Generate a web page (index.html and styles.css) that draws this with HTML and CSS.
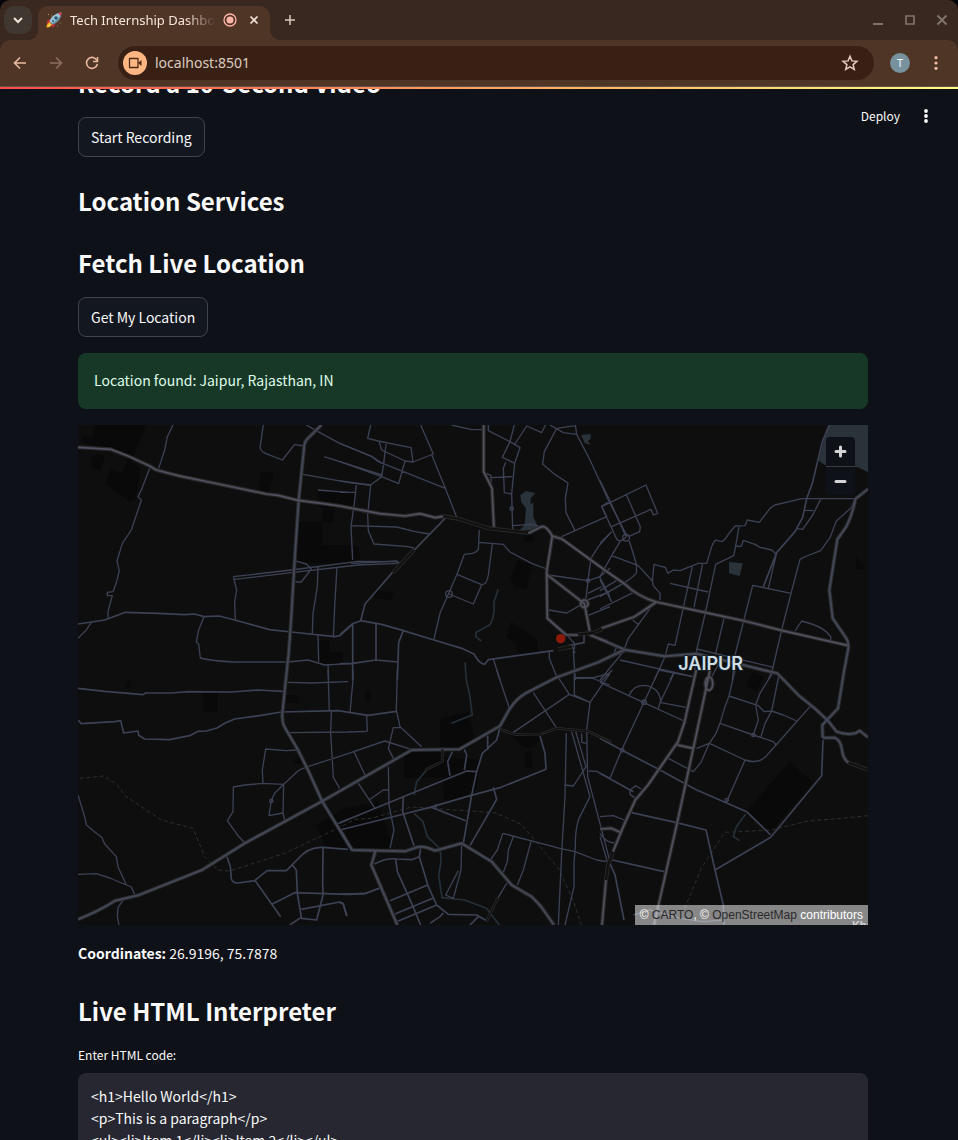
FILE: index.html
```html
<!DOCTYPE html>
<html lang="en">
<head>
<meta charset="utf-8">
<title>Tech Internship Dashboard</title>
<link rel="stylesheet" href="styles.css">
</head>
<body>
<div class="window">
  <header class="tabstrip">
    <button class="tab-search" aria-label="Search tabs"><svg width="28" height="28" viewBox="0 0 28 28"><path d="M10 12l4 4 4-4" fill="none" stroke="#f3e4da" stroke-width="2"/></svg></button>
    <div class="tab">
      <svg class="favicon" width="16" height="16" viewBox="0 0 16 16">
        <path d="M4.500 7L1.500 8.500.5 11.500 4.500 10zM9 11.500L8.500 14.500 5.500 15.500 6 11.500z" fill="#c8293a"/>
        <path d="M3.500 9.500C5 5 9 1 15.500.5 15 7 11 11 6.500 12.500z" fill="#9fc3d4"/>
        <path d="M5.500 11.500C10 9.500 14 6 15.500.5 15 7 11 11 6.500 12.500z" fill="#5f8ba3"/>
        <path d="M12 1.200L15.500.5 14.900 4z" fill="#d93343"/>
        <circle cx="10" cy="6" r="1.800" fill="#27576f"/><circle cx="7" cy="9" r="1" fill="#27576f"/>
        <path d="M3.500 10L6 12.500C5 15 2.500 15.500.5 15.500.5 13 1 11 3.500 10z" fill="#f4a21b"/>
        <path d="M3.500 11.500L4.500 12.500C4 14 2.500 14.500 1.500 14.500z" fill="#ffe36b"/>
        <path d="M2 2.500h1M5 4h1M13.500 11h1M11 14h1" stroke="#a48a62"/>
      </svg>
      <span class="tab-title">Tech Internship Dashboard</span>
      <svg width="14" height="14" viewBox="0 0 14 14"><circle cx="7" cy="7" r="6" fill="none" stroke="#ffb4a8" stroke-width="1.300"/><circle cx="7" cy="7" r="3.500" fill="#ffb4a8"/></svg>
      <button class="tab-close" aria-label="Close tab"><svg width="10" height="10" viewBox="0 0 10 10"><path d="M1.500 1.500l7 7m0-7l-7 7" stroke="#f3e4da" stroke-width="1.700"/></svg></button>
    </div>
    <button class="new-tab" aria-label="New tab"><svg width="12" height="12" viewBox="0 0 12 12"><path d="M6 1v10M1 6h10" stroke="#dbc8bc" stroke-width="1.500"/></svg></button>
    <div class="window-controls">
      <button aria-label="Minimize"><svg width="12" height="12" viewBox="0 0 12 12"><path d="M1 10h10" stroke="#80736c" stroke-width="2"/></svg></button>
      <button aria-label="Maximize"><svg width="12" height="12" viewBox="0 0 12 12"><path d="M2 2h8v8H2z" fill="none" stroke="#80736c" stroke-width="1.700"/></svg></button>
      <button aria-label="Close"><svg width="12" height="12" viewBox="0 0 12 12"><path d="M1.500 1.500l9 9m0-9l-9 9" stroke="#80736c" stroke-width="2"/></svg></button>
    </div>
  </header>
  <nav class="toolbar">
    <button aria-label="Back"><svg width="16" height="16" viewBox="0 0 16 16"><path d="M14 8H3M8 2.500L2.500 8 8 13.500" fill="none" stroke="#e9b99f" stroke-width="1.600"/></svg></button>
    <button aria-label="Forward"><svg width="16" height="16" viewBox="0 0 16 16"><path d="M2 8h11M8 2.500L13.500 8 8 13.500" fill="none" stroke="#8e6f5f" stroke-width="1.600"/></svg></button>
    <button aria-label="Reload"><svg width="16" height="16" viewBox="0 0 16 16"><path d="M13 5.500A5.500 5.500 0 1 0 13.400 9" fill="none" stroke="#e9b99f" stroke-width="1.600"/><path d="M13.500 2v4.500H9" fill="none" stroke="#e9b99f" stroke-width="1.600"/></svg></button>
    <div class="address">
      <button class="camera" aria-label="Camera in use"><svg width="14" height="12" viewBox="0 0 14 12"><path d="M1.500 1.500h8.500v9H1.500z" fill="none" stroke="#4a2a14" stroke-width="1.300" stroke-linejoin="round"/><path d="M10 6l3.500-3v6z" fill="#4a2a14"/></svg></button>
      <input type="text" aria-label="Address" value="localhost:8501">
      <button class="star" aria-label="Bookmark"><svg width="18" height="18" viewBox="0 0 18 18"><path d="M9 2.200l1.900 4.700 5 .4-3.800 3.300 1.200 4.900L9 12.800l-4.300 2.700 1.200-4.900L2.100 7.300l5-.4z" fill="none" stroke="#e2cabe" stroke-width="1.500"/></svg></button>
    </div>
    <button class="avatar" aria-label="Profile">T</button>
    <button class="menu" aria-label="Menu"><svg width="4" height="14" viewBox="0 0 4 14" fill="#f0bca1"><circle cx="2" cy="1.700" r="1.600"/><circle cx="2" cy="7" r="1.600"/><circle cx="2" cy="12.300" r="1.600"/></svg></button>
  </nav>

  <div class="app">
    <div class="decoration"></div>
    <div class="app-header">
      <button>Deploy</button>
      <button aria-label="Main menu"><svg width="4" height="14" viewBox="0 0 4 14" fill="#fafafa"><circle cx="2" cy="2" r="1.900"/><circle cx="2" cy="7" r="1.900"/><circle cx="2" cy="12" r="1.900"/></svg></button>
    </div>
    <main class="content">
      <h2>Record a 10-Second Video</h2>
      <button class="btn">Start Recording</button>
      <h2>Location Services</h2>
      <h2>Fetch Live Location</h2>
      <button class="btn">Get My Location</button>
      <div class="alert" role="alert">Location found: Jaipur, Rajasthan, IN</div>
      <section class="map" aria-label="Map of Jaipur">
        <svg class="map-canvas" viewBox="0 0 2370 1500" preserveAspectRatio="xMidYMid slice">
          <defs>
            <g id="highways">
              <path d="M730 0L690 40Q678 51 678 70L662 226L650 405L640 575L632 685L613 865Q611 890 620 907L660 975L690 1035L732 1128L822 1275"/>
              <path d="M0 1483Q60 1460 112 1427L180 1411L372 1335L500 1255L730 1130L1001 975L1144 973L1266 903L1296 850Q1316 820 1346 803L1436 757L1560 712L1640 674"/>
              <path d="M786 1215L822 1275L981 1279L1016 1267Q1036 1260 1071 1277L1151 1255L1241 1310L1301 1380L1361 1415L1388 1443L1428 1500"/>
              <path d="M893 1276L880 1320L958 1500"/>
              <path d="M2370 192L2332 222Q2325 265 2305 305L2278 343L2254 495L2264 580L2305 640Q2314 655 2310 675L2298 740L2280 850L2233 900L2234 938"/>
              <path d="M1561 640L1640 674L1760 694L1856 686L1900 697L2098 745L2163 812L2210 850L2250 887L2276 920Q2300 930 2332 925L2345 917L2370 937"/>
              <path d="M2234 938L2270 938Q2288 945 2292 975Q2296 1004 2312 1013"/>
            </g>
            <g id="arterials">
              <path d="M0 67L98 73L150 93L215 123L235 135L300 152L450 183L565 207L600 211L660 226L730 235L786 243L906 266L981 273L1026 266L1071 278L1096 274"/>
              <path d="M1217 0V140L1242 190L1248 312"/>
              <path d="M1351 325L1390 305Q1404 300 1423 333L1452 342L1580 435L1640 477Q1680 515 1735 531L1880 562L2000 588L2110 616L2308 661"/>
              <path d="M1423 333L1406 440L1408 580L1465 630H1500"/>
              <path d="M1406 448L1519 536L1535 618M1535 630L1588 650M1570 610L1670 575L1735 531"/>
              <path d="M1855 735L1840 800L1820 890L1800 950L1710 1080L1672 1125L1640 1195L1605 1280"/>
              <path d="M1896 735L1846 970L1796 1200L1728 1500M1798 960L1846 970M1566 1212L1600 1210L1627 1222M1584 1365L1572 1500"/>
              <ellipse cx="1893" cy="776" rx="11" ry="20"/>
              <circle cx="1519" cy="536" r="11"/>
            </g>
            <g id="tunnels">
              <path d="M1096 274L1140 281L1232 310L1350 323M1008 375L945 443M1500 628L1545 624L1572 612M1440 673L1480 665M1604 1285L1590 1320L1584 1365M2312 1013L2370 1035"/>
            </g>
            <g id="railways">
              <path d="M1266 913L1310 928L1390 927L1435 910L1528 918L1600 951M1093 973V1010L1042 1035M1260 1418L1225 1490"/>
            </g>
          </defs>
          <rect width="2370" height="1500" fill="#0e0e0e"/>
          <g class="block">
            <path d="M50 0H203L160 112L188 128L172 225L153 230L80 175L100 132L132 145L155 90L40 60L10 52L15 30L42 38zM40 100L55 85L80 93L68 138L38 125z"/>
            <path d="M550 138L588 146L572 200L540 190zM720 200H830V245H770L765 292H733V360H830V415H650L660 290H733V245H720zM786 362H840L846 403H786zM890 496L946 502L940 525L892 520zM725 645H755V680H795V718H725z"/>
            <path d="M1318 405L1362 418L1346 492L1315 488L1295 465zM1300 590L1380 645V685H1325L1310 655L1284 635zM1340 330H1368V350H1336z"/>
            <path d="M375 800H420V860H375zM625 810H662V833H625zM145 768H160L155 790H142zM715 1200L800 1150L900 1130L945 1270L822 1280L740 1262zM650 1000H670V1016H650z"/>
            <path d="M1088 880L1172 860L1188 940L1140 980H1086zM978 975H1095V1058H978zM1090 995L1205 1005L1195 1090L1140 1125H1098zM1296 930L1385 935L1370 965L1340 968zM1342 980L1360 980L1364 1028H1340zM860 798L878 798V828H863z"/>
            <path d="M2136 1010L2204 1073L2078 1220L2006 1158zM2026 740L2056 755L2035 800L2003 783zM2332 395L2360 420L2354 435L2335 435z"/>
          </g>
          <g class="water">
            <path d="M2253 0H2370V142L2340 127L2248 125L2222 107L2236 50zM1953 411L1994 415L1985 453L1953 445z"/>
            <path d="M1510 30L1538 27V42L1530 48L1538 60L1520 55zM1327 210L1345 198L1372 205L1358 220V240L1366 232V276L1380 305L1360 315H1325L1340 300L1344 250L1330 232z"/>
          </g>
          <path class="stream" d="M1261 493L1248 530V560Q1245 585 1235 600L1195 622L1193 635L1210 648M1161 712L1165 765L1175 810L1183 870L1120 895M1048 1032L1016 1070L1008 1110M1008 1165L1035 1190L1048 1235L1080 1265Q1092 1285 1088 1315L1082 1350L1092 1418L1160 1425L1225 1450L1264 1500M2003 1168L1975 1205L1966 1235L1985 1247"/>
          <path class="boundary" d="M5 1060L78 1053L118 1080L142 1113L250 1185L345 1210L380 1295L420 1335L455 1338L620 1285L790 1205L830 1183L880 1180L1000 1146L1250 1163L1330 1198L1441 1330L1485 1425L1510 1500M1820 1450L1870 1330L1940 1222L2080 1215L2190 1188L2290 1180L2370 1172"/>
          <g class="minor" transform="translate(0 -15)">
            <path d="M285 15L268 50L260 90L242 145M215 145L190 210L180 230L190 240L160 330L133 370L117 423L124 452L116 485L105 515L88 517V527H103L97 548L90 575V595"/>
            <path class="wide" d="M0 612L80 600L142 577L240 580L320 584L350 582L378 590L424 588L470 600L575 629L640 636L770 650L786 647L825 612"/>
            <path d="M40 607L25 630L0 655M378 590L362 630L355 666L362 672L367 714Q400 723 470 726H630L690 720L740 735L810 731"/>
            <path d="M556 15L546 83Q550 97 570 103L613 120L650 73L675 78M685 15L720 35L785 70L880 108L912 130M738 110L912 165M675 163L810 187L878 196M720 210L810 217M650 422L685 432L700 447L670 486H652M466 470L640 450L840 424L960 425M470 478L640 458L840 435L960 430M466 470L476 510L470 545L472 600M720 440L718 500L705 580L703 640M777 440L770 560L766 650M720 646L722 725M750 735L752 780"/>
          </g>
          <g class="minor" transform="translate(786 -15)">
            <path d="M92 15L83 55L115 63L213 83L219 126L195 123L125 90L117 63M139 66L131 130L125 170L176 191L195 123M219 126L280 102L242 15M275 104L316 205L350 292M0 70L95 110L115 125L316 205M0 125L125 170L92 195L0 183M92 195L83 285L85 332L102 372L205 380L222 384M49 195L43 250L33 320L38 420M0 217H47M33 317L170 321L225 335L268 342M33 430L170 423L180 430"/>
            <path class="wide" d="M318 292L155 460L75 552L62 602L36 612L0 644M62 602L125 613L190 632L282 660L368 686L402 702Q420 735 435 732L445 719L640 692M685 677L732 668V645M38 612V780M108 612V720M190 632L176 668L172 780M0 731L38 730L108 720L172 726"/>
            <path d="M418 330L415 388Q412 395 398 400L373 403L351 463L300 580L282 657M415 367L490 373L510 396L575 430L620 447M457 372L445 465Q440 495 425 494L351 463M425 494L400 552L327 522M335 15L395 29H430M445 15V32L510 65L540 83L524 130L487 112L510 65L523 15M523 75L560 18L605 38L616 15M524 130L515 222L518 330M497 127L490 145L493 218L515 222M455 173L517 170M440 160L453 167V205M518 317L575 313L600 320"/>
            <path d="M650 25L613 95L608 132L640 160L684 189L676 235L678 278L705 332M630 15L670 38L710 43L706 15M650 25L706 17M710 43L750 120L805 240L862 350M705 332L665 350M705 332L800 290L785 258L805 247M626 465L744 482L780 470L810 445M753 415L744 482L737 545M753 415L775 380L810 340M778 470L810 530M744 520L785 500M742 540L810 515M626 570L680 579L730 550M745 586L810 560M675 640L705 672L700 695L706 780M697 680L705 700M628 697V715L652 775M460 717L480 780M706 772L760 773L810 760"/>
            <circle cx="327" cy="522" r="10"/><circle cx="515" cy="266" r="5"/><circle cx="744" cy="482" r="5"/>
          </g>
          <g class="minor" transform="translate(1566 -15)">
            <path d="M0 182L30 243L60 310L78 350M5 260L138 195L173 280L160 285L153 268L35 320M5 260L50 357Q60 370 78 352M78 222L121 320L119 335L85 350M35 335L0 370M60 365L35 407L0 470M35 407L115 437M88 363L110 435L109 460Q95 475 70 490L0 530M0 512L60 475M0 567L105 515M0 480L35 545M115 437L157 483L160 497L180 520V540M157 483L162 433L197 443L203 460L220 450L240 452L295 430H320L335 380Q345 355 352 362L365 365Q375 360 385 343L405 318L435 317L442 300L478 307L510 265L525 255L605 236H765"/>
            <path class="wide" d="M688 15L667 65L637 190L620 236L608 292L585 335L530 398L490 500"/>
            <path d="M530 398L505 505M614 271L640 272M662 238L638 285L608 328L590 326M765 238L752 265L709 303L690 353L662 392L620 408L600 418L573 520L545 630L517 750L505 780M573 520L458 496L405 705M417 320L407 378L424 379L430 361L465 373L480 382L515 390L528 402M407 378L401 407L347 433L318 570L290 690L283 765M277 440L225 676L205 672L195 710L163 780M308 430L282 562M210 490L325 516M372 595L347 700M585 633L605 603L635 612Q675 625 692 650V660M290 687L520 742M165 545L85 655L70 695L0 780M98 600L117 615M0 727L50 705L90 690M50 680L40 705M60 720L280 770M222 758L210 780M370 705L330 780M405 705L397 780"/>
            <circle cx="78" cy="353" r="10"/><circle cx="315" cy="576" r="5"/><circle cx="433" cy="603" r="5"/><circle cx="548" cy="632" r="4"/>
          </g>
          <g class="minor" transform="translate(0 735)">
            <path class="wide" d="M0 55L80 64L195 74L203 69L280 69L330 65L460 66L540 60L615 64M0 150L10 161L110 155L128 152L137 189L180 183L182 196L200 207L275 209L335 197L360 184L385 183L417 174L440 160L470 147L545 137L610 126L780 122L870 136L955 124"/>
            <path d="M630 37L700 39L810 35M750 0L754 122M635 188L810 186L868 184M760 124L758 190L766 322L785 355M655 240L625 242L563 237L553 300L555 340L617 343L660 303Q670 295 720 280L810 251L920 213L1000 238M555 340L500 345L466 351L465 425L448 452L480 497L500 518M617 343L590 370L580 390L573 437L615 429L620 450M617 343L615 430M0 375L20 440L25 465L72 503L80 522L115 560L120 590L145 645M0 613L55 611L95 624L160 651L170 673M135 692L120 712L118 740L123 765"/>
            <path class="wide" d="M447 560L457 590L460 627Q465 640 480 639L530 632L567 602H625L660 567Q690 530 735 532L810 538M530 630L608 740M583 702L650 668L810 673L862 670L905 655M643 585L655 600L658 670L670 742L635 765M735 535L734 640L735 675L716 750L670 745M670 718L785 696L795 700L807 738M778 462L810 448"/>
            <circle cx="580" cy="393" r="5"/>
          </g>
          <g class="minor" transform="translate(786 735)">
            <path d="M39 0V30L30 127M172 0L169 120L180 170L245 230M80 138L82 184M180 173H160L145 235L160 265M42 245L75 315M145 290L147 405L155 445L162 480L150 535M55 340L105 415M87 390L130 360H147"/>
            <path class="wide" d="M0 458L190 380L380 303L410 305M0 480L180 435L270 412L380 380L480 353L618 298L615 250L600 197M190 380L188 425L222 527M270 410L377 452M287 403V418M480 172L470 210L427 250L410 305L395 375L370 520M443 197V240M337 245L323 275L330 317M373 238L380 255L373 300M460 352L470 388L390 527"/>
            <path d="M470 0L508 115M580 68L647 170M520 187L688 73L650 15M703 10V75L750 97L740 180M688 73L750 97L810 10M703 25L755 24L810 45M679 190L675 380L665 550L655 765M740 180L743 320L810 575M695 185L750 380L717 445Q705 480 706 530L702 580V650L675 765M707 185L738 290L700 348L673 345M725 190V217L740 220M747 303L770 304L810 325M488 490L660 535L705 545L770 570L800 575M488 490L472 540L450 572M520 500L505 540L502 575L490 607M573 515L550 600L532 645M500 640L473 685M365 525L363 600L340 685L317 675L355 602"/>
            <path class="wide" d="M103 582Q140 563 170 567L215 569L238 560L242 535M167 567L172 605L215 700L242 765M238 560L265 650L290 705L325 733L410 735L440 752M150 692L263 645M165 732L278 685M173 754L290 705M310 728L300 740L270 760M390 765L415 740M0 672L75 671L117 655M0 698L10 703L20 738"/>
          </g>
          <g class="minor" transform="translate(1566 735)">
            <path d="M0 37L130 97L252 153M37 0L0 37M177 0L132 97L65 240L30 325M88 75Q100 47 130 46Q180 50 183 98L262 113M177 0L277 20M222 10L180 98L175 115M205 265L280 305L303 277L328 220L290 235"/>
            <path class="wide" d="M0 205L65 240L180 300L290 360L325 375L440 425L512 495M95 428L230 458L318 480L345 600L370 705L372 765M345 600L512 502L665 317L669 210M0 310L100 365M37 570L192 605M30 580L45 615L72 750"/>
            <path d="M405 0L387 78L375 110L360 160L348 190L328 220L435 270L380 395M387 78L475 107L493 125L515 123L550 135L590 153M517 10L480 70L467 105L475 150L460 195M537 15L515 123L495 160L483 200M360 160L460 195L520 215L528 225M630 110L528 225L495 262Q470 282 435 270M90 360L107 347L123 357M90 360V373L107 385M0 440L40 437L73 450M0 490Q20 520 43 518M0 500L22 575M100 735L150 720L240 745L310 755L370 750"/>
            <circle cx="132" cy="97" r="7"/><circle cx="67" cy="241" r="5"/><circle cx="460" cy="195" r="5"/><circle cx="230" cy="459" r="5"/><circle cx="380" cy="390" r="5"/>
          </g>
          <use href="#highways" class="casing"/><use href="#arterials" class="casing"/>
          <use href="#highways" class="highway"/><use href="#arterials" class="arterial"/>
          <use href="#railways" class="railway"/><use href="#railways" class="railway-core"/>
          <use href="#tunnels" class="tunnel"/><use href="#tunnels" class="tunnel-core"/>
          <text class="city" x="1898" y="734">JAIPUR</text>
          <text class="suburb" x="2322" y="1512">Kho</text>
          <circle cx="1448" cy="641" r="14" fill="#8b1a08"/>
        </svg>
        <div class="zoom-controls">
          <button aria-label="Zoom in"><svg width="13" height="13" viewBox="0 0 13 13"><path d="M6.500 2v9M2 6.500h9" stroke="#d4d4d4" stroke-width="3" stroke-linecap="round"/></svg></button>
          <button aria-label="Zoom out"><svg width="13" height="13" viewBox="0 0 13 13"><path d="M2 6.500h9" stroke="#d4d4d4" stroke-width="3" stroke-linecap="round"/></svg></button>
        </div>
        <div class="attribution">© <a href="#carto">CARTO</a>, © <a href="#osm">OpenStreetMap</a> contributors</div>
      </section>
      <p><strong>Coordinates:</strong> 26.9196, 75.7878</p>
      <h2>Live HTML Interpreter</h2>
      <div class="field">
        <label for="html-code">Enter HTML code:</label>
        <textarea id="html-code" rows="6" spellcheck="false">&lt;h1&gt;Hello World&lt;/h1&gt;
&lt;p&gt;This is a paragraph&lt;/p&gt;
&lt;ul&gt;&lt;li&gt;Item 1&lt;/li&gt;&lt;li&gt;Item 2&lt;/li&gt;&lt;/ul&gt;</textarea>
      </div>
    </main>
  </div>
</div>
</body>
</html>
```
FILE: styles.css
```css
* { box-sizing: border-box; }
body { margin: 0; background: #05070c; font-family: "Noto Sans CJK SC", "Noto Sans", sans-serif; }
button { border: 0; padding: 0; background: none; color: inherit; font: inherit; display: flex; align-items: center; justify-content: center; }
svg { display: block; flex: none; }

.window { height: 100vh; display: flex; flex-direction: column; overflow: hidden; border-radius: 10px 10px 0 0; background: #38281f; font-family: "Noto Sans", sans-serif; }

.tabstrip { height: 40px; flex: none; display: flex; align-items: center; padding: 0 10px 0 4px; }
.tab-search { width: 28px; height: 28px; border-radius: 10px; background: #403730; }
.tab { position: relative; align-self: flex-end; width: 232px; height: 34px; margin-left: 6px; padding: 0 11px 6px 8px; display: flex; align-items: center; border-radius: 10px 10px 0 0; background: #4f3526; }
.tab::before, .tab::after { content: ""; position: absolute; bottom: 0; width: 10px; height: 10px; }
.tab::before { left: -10px; background: radial-gradient(circle at 0 0, transparent 10px, #4f3526 10px); }
.tab::after { right: -10px; background: radial-gradient(circle at 100% 0, transparent 10px, #4f3526 10px); }
.tab-title { flex: 1; min-width: 0; margin: 0 8px; overflow: hidden; white-space: nowrap; color: #f5e5db; font-size: 13px; line-height: 20px; mask-image: linear-gradient(to right, #000 80%, transparent); }
.tab-close { width: 10px; height: 10px; margin-left: 12px; }
.new-tab { width: 28px; height: 28px; margin-left: 6px; }
.window-controls { margin-left: auto; display: flex; gap: 20px; }

.toolbar { height: 47px; flex: none; display: flex; align-items: center; gap: 20px; padding: 0 20px 1px 12px; border-radius: 10px 10px 0 0; border-bottom: 1px solid #62524a; background: #4f3526; }
.address { flex: 1; display: flex; align-items: center; gap: 8px; height: 34px; margin-left: -2px; margin-right: -4px; padding: 0 15px 0 5px; border-radius: 17px; background: #382114; }
.camera { flex: none; width: 24px; height: 24px; border-radius: 50%; background: #ffb683; }
.address input { flex: 1; min-width: 0; border: 0; padding: 0; background: none; outline: 0; color: #ddcbc0; font: 14px/20px "Noto Sans", sans-serif; }
.avatar { width: 20px; height: 20px; margin-right: 4px; border-radius: 50%; background: #77919d; color: #f4f6f7; font-size: 11px; }

.app { position: relative; flex: 1; min-height: 0; overflow: hidden; background: #0e1117; color: #fafafa; font: 14px/26px "Noto Sans CJK SC", "Noto Sans", sans-serif; }
.decoration { position: absolute; top: 0; left: 0; right: 0; height: 2px; background: linear-gradient(90deg, #ff4b4b, #ffbd66 66%, #fffd80); z-index: 2; }
.app-header { position: absolute; top: 17px; right: 30px; display: flex; gap: 24px; z-index: 2; font-size: 12px; line-height: 24px; }
.content { display: flex; flex-direction: column; gap: 16px; margin-top: -32px; padding: 0 90px 0 78px; }
h2 { margin: 0; padding: 11px 0 1px; font-size: 24px; line-height: 34px; font-weight: 700; }
p { margin: 0; line-height: 24px; padding-bottom: 2px; }
.btn { align-self: flex-start; height: 40px; padding: 0 12px; border: 1px solid #41444c; border-radius: 8px; background: #131720; }
.alert { padding: 14px 16px 16px; border-radius: 8px; background: #183827; color: #dffde9; }

.map { position: relative; height: 500px; overflow: hidden; background: #0e0e0e; }
.map-canvas { width: 100%; height: 100%; }
.block { fill: #090909; }
.water { fill: #2a333a; }
.stream, .boundary, .minor, .highway, .arterial, .casing, .tunnel, .tunnel-core, .railway, .railway-core { fill: none; stroke-linejoin: round; }
.stream { stroke: #263038; stroke-width: 5; }
.boundary { stroke: #2b2f2e; stroke-width: 3; stroke-dasharray: 12 8; }
.minor { stroke: #3d4154; stroke-width: 4; }
.minor .wide { stroke-width: 5; }
.casing { stroke: #28292b; stroke-width: 12; }
.highway { stroke: #434655; stroke-width: 6; }
.arterial { stroke: #51505d; stroke-width: 5; }
.tunnel { stroke: #2c2b29; stroke-width: 12; }
.tunnel-core { stroke: #111; stroke-width: 7; }
.railway { stroke: #2e2e30; stroke-width: 8; }
.railway-core { stroke: #111; stroke-width: 4; }
.city { fill: #cfdfe6; stroke: #182126; stroke-width: 6; paint-order: stroke; font: 600 54px "Inter", sans-serif; text-anchor: middle; }
.suburb { fill: #a9b0b3; font: 600 33px "Inter", sans-serif; }

.zoom-controls { position: absolute; top: 12px; right: 13px; width: 29px; border-radius: 4px; overflow: hidden; background: #0e1117; }
.zoom-controls button { width: 29px; height: 29px; }
.zoom-controls button + button { border-top: 1px solid #3a3c40; }
.attribution { position: absolute; right: 0; bottom: 0; padding: 0 5px; background: rgba(255, 255, 255, 0.5); color: #fff; font: 12px/20px "Liberation Sans", sans-serif; }
.attribution a { color: #292929; text-decoration: none; }

.field { display: flex; flex-direction: column; gap: 8px; }
.field label { font-size: 12px; line-height: 20px; }
.field textarea { width: 100%; padding: 11px 12px; border: 1px solid transparent; border-radius: 8px; background: #262730; color: #fafafa; font: 14px/22px "Noto Sans CJK SC", "Noto Sans", sans-serif; resize: none; outline: 0; }
```
